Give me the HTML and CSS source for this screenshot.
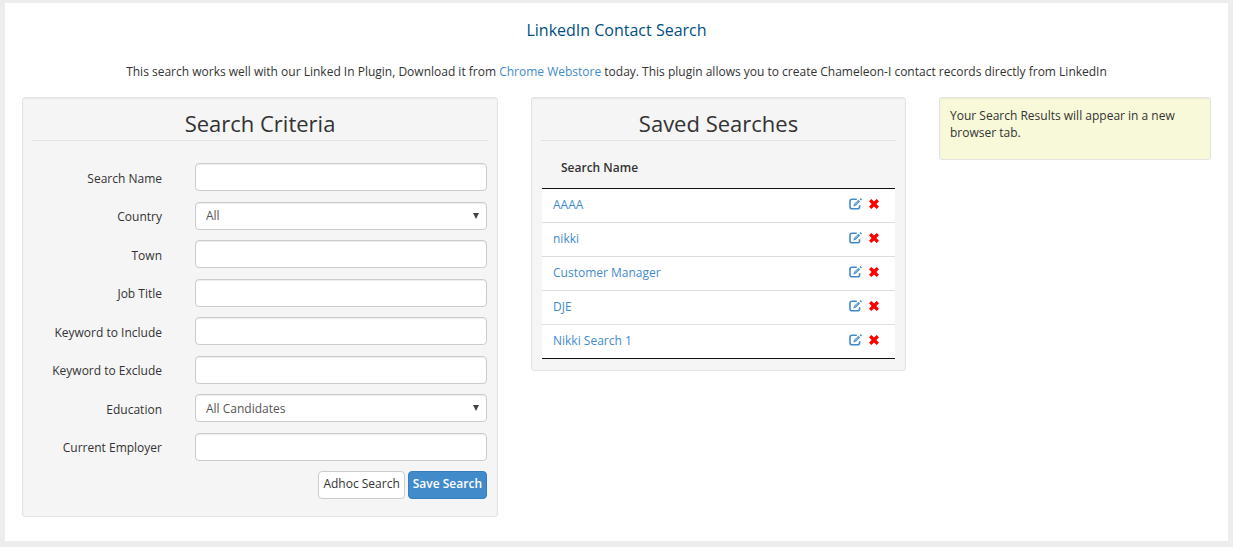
FILE: index.html
```html
<!DOCTYPE html>
<html lang="en">
<head>
<meta charset="utf-8">
<title>LinkedIn Contact Search</title>
<link rel="stylesheet" href="styles.css">
</head>
<body>
<svg class="sprite" aria-hidden="true">
  <symbol id="edit" viewBox="0 0 13 12">
    <path d="M7.8 1.3H3Q1 1.3 1 3.3v5.4q0 2 2 2h5.6q2 0 2-2V7.2" fill="none" stroke="currentColor" stroke-width="1.6"/>
    <path d="M4.4 8.4l.6-2.3L9.4 1.8l1.7 1.7L6.700 7.800z" fill="currentColor"/>
    <path d="M5.8 6.7L9.4 3.2" stroke="#fff" stroke-width=".6"/>
    <path d="M10.500.9L11.4 0 13 1.600l-.9.9z" fill="currentColor"/>
  </symbol>
  <symbol id="remove" viewBox="0 0 10 10">
    <path d="M2.3 0L5 2.6 7.7 0 10 2.3 7.4 5 10 7.7 7.7 10 5 7.4 2.3 10 0 7.7 2.6 5 0 2.3z" fill="currentColor"/>
  </symbol>
</svg>
<div class="page">
  <main class="sheet">
    <h1 class="title">LinkedIn Contact Search</h1>
    <p class="intro">This search works well with our Linked In Plugin, Download it from <a href="#">Chrome Webstore</a> today. This plugin allows you to create Chameleon-I contact records directly from LinkedIn</p>
    <div class="columns">
      <section class="well criteria">
        <h2 class="heading">Search Criteria</h2>
        <form class="form">
          <div class="field"><label for="name">Search Name</label><input class="control" id="name" type="text"></div>
          <div class="field"><label for="country">Country</label><div class="select"><select class="control" id="country"><option>All</option></select></div></div>
          <div class="field"><label for="town">Town</label><input class="control" id="town" type="text"></div>
          <div class="field"><label for="job">Job Title</label><input class="control" id="job" type="text"></div>
          <div class="field"><label for="include">Keyword to Include</label><input class="control" id="include" type="text"></div>
          <div class="field"><label for="exclude">Keyword to Exclude</label><input class="control" id="exclude" type="text"></div>
          <div class="field"><label for="education">Education</label><div class="select"><select class="control" id="education"><option>All Candidates</option></select></div></div>
          <div class="field"><label for="employer">Current Employer</label><input class="control" id="employer" type="text"></div>
          <div class="actions">
            <button class="btn" type="button">Adhoc Search</button>
            <button class="btn primary" type="button">Save Search</button>
          </div>
        </form>
      </section>
      <section class="well saved">
        <h2 class="heading">Saved Searches</h2>
        <table class="table">
          <thead><tr><th colspan="2">Search Name</th></tr></thead>
          <tbody>
            <tr><td><a href="#">AAAA</a></td><td class="tools"><div class="icons"><a href="#" aria-label="Edit"><svg class="edit"><use href="#edit"/></svg></a><a class="delete" href="#" aria-label="Delete"><svg class="remove"><use href="#remove"/></svg></a></div></td></tr>
            <tr><td><a href="#">nikki</a></td><td class="tools"><div class="icons"><a href="#" aria-label="Edit"><svg class="edit"><use href="#edit"/></svg></a><a class="delete" href="#" aria-label="Delete"><svg class="remove"><use href="#remove"/></svg></a></div></td></tr>
            <tr><td><a href="#">Customer Manager</a></td><td class="tools"><div class="icons"><a href="#" aria-label="Edit"><svg class="edit"><use href="#edit"/></svg></a><a class="delete" href="#" aria-label="Delete"><svg class="remove"><use href="#remove"/></svg></a></div></td></tr>
            <tr><td><a href="#">DJE</a></td><td class="tools"><div class="icons"><a href="#" aria-label="Edit"><svg class="edit"><use href="#edit"/></svg></a><a class="delete" href="#" aria-label="Delete"><svg class="remove"><use href="#remove"/></svg></a></div></td></tr>
            <tr><td><a href="#">Nikki Search 1</a></td><td class="tools"><div class="icons"><a href="#" aria-label="Edit"><svg class="edit"><use href="#edit"/></svg></a><a class="delete" href="#" aria-label="Delete"><svg class="remove"><use href="#remove"/></svg></a></div></td></tr>
          </tbody>
        </table>
      </section>
      <aside class="well note">Your Search Results will appear in a new browser tab.</aside>
    </div>
  </main>
</div>
</body>
</html>
```
FILE: styles.css
```css
* { box-sizing: border-box; }
html { background: #fff; }
body {
  margin: 0;
  color: #333;
  font-family: "Trebuchet MS", "Open Sans", "Noto Sans", sans-serif;
  font-size: 12px;
  line-height: 17px;
}
a { color: #428bca; text-decoration: none; }
.sprite { display: none; }
.page { padding: 3px 5px 6px; background: #ededed; }
.sheet { padding: 16px 17px 24px; background: #fff; }
.title {
  margin: 0;
  color: #00507f;
  font-size: 16px;
  font-weight: 500;
  line-height: 22px;
  text-align: center;
}
.intro { margin: 22px 0 17px; text-align: center; }
.columns {
  display: grid;
  grid-template-columns: 476fr 375fr 272fr;
  gap: 33px;
  align-items: start;
}
.well {
  padding: 9px;
  border: 1px solid #e3e3e3;
  border-radius: 3px;
  background: #f5f5f5;
  box-shadow: inset 0 1px 1px rgba(0, 0, 0, .05);
}
.criteria { padding-bottom: 17px; }
.saved { padding-bottom: 11px; }
.heading {
  margin: 0;
  padding-bottom: 1px;
  border-bottom: 1px solid #e3e3e3;
  font-size: 22px;
  font-weight: 400;
  line-height: 32px;
  text-align: center;
}
.form {
  display: flex;
  flex-direction: column;
  justify-content: space-between;
  min-height: 336px;
  margin-top: 22px;
  padding-right: 1px;
}
.field {
  display: grid;
  grid-template-columns: 130fr 292fr;
  column-gap: 33px;
  align-items: center;
}
.field label { padding-top: 2px; text-align: right; }
.control {
  display: block;
  width: 100%;
  height: 28px;
  padding: 0 10px;
  border: 1px solid #ccc;
  border-radius: 4px;
  background: #fff;
  box-shadow: inset 0 1px 1px rgba(0, 0, 0, .075);
  color: #555;
  font: inherit;
  appearance: none;
}
.select { position: relative; }
.select::after {
  position: absolute;
  top: 11px;
  right: 8px;
  border: 3px solid transparent;
  border-top: 6px solid #444;
  border-bottom: 0;
  content: "";
  pointer-events: none;
}
.actions { display: flex; justify-content: flex-end; gap: 3px; }
.btn {
  height: 28px;
  padding: 0 4px 3px;
  border: 1px solid #ccc;
  border-radius: 4px;
  background: #fff;
  color: #333;
  font: inherit;
}
.primary {
  border-color: #357ebd;
  background: #428bca;
  color: #fff;
  font-weight: 600;
}
.table {
  width: calc(100% - 2px);
  margin: 0 1px;
  border-collapse: separate;
  border-spacing: 0;
}
.table th {
  height: 48px;
  padding: 6px 19px 0;
  border-bottom: 1px solid #111;
  font-weight: 600;
  text-align: left;
  vertical-align: middle;
}
.table td {
  height: 34px;
  padding: 0 11px 2px;
  border-bottom: 1px solid #ddd;
  background: #fff;
}
.table .tools { width: 60px; padding: 0 16px 3px 0; }
.table tr:last-child td { border-bottom-color: #111; }
.icons { display: flex; justify-content: flex-end; align-items: center; gap: 7px; }
.icons a { display: block; }
.icons svg { display: block; }
.edit { width: 13px; height: 12px; }
.remove { width: 10px; height: 10px; }
.delete { color: #f00; }
.note { padding: 9px 10px 18px; background: #f8f9d9; }
```
